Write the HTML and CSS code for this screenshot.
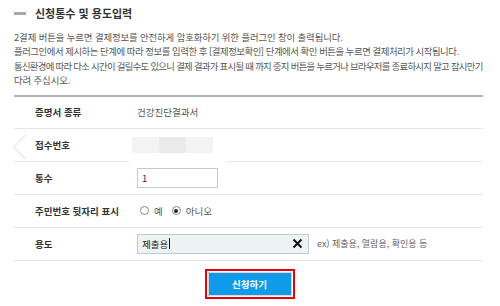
FILE: index.html
```html
<!DOCTYPE html>
<html lang="ko">
<head>
    <meta charset="UTF-8">
    <title>신청통수 및 용도입력</title>
    <link rel="stylesheet" href="styles.css">
</head>
<body>
    <div class="section">
        <h2 class="section-title"><span class="title-bar"></span>신청통수 및 용도입력</h2>

        <div class="notice">
            <p>2결제 버튼을 누르면 결제정보를 안전하게 암호화하기 위한 플러그인 창이 출력됩니다.</p>
            <p class="tight">플러그인에서 제시하는 단계에 따라 정보를 입력한 후 [결제정보확인] 단계에서 확인 버튼을 누르면 결제처리가 시작됩니다.</p>
            <p class="tighter">통신환경에 따라 다소 시간이 걸릴수도 있으니 결제 결과가 표시될 때 까지 중지 버튼을 누르거나 브라우저를 종료하시지 말고 잠시만기</p>
            <p>다려 주십시오.</p>
        </div>

        <div class="form-table">
            <div class="row first">
                <div class="label">증명서 종류</div>
                <div class="value">건강진단결과서</div>
            </div>
            <div class="row">
                <span class="chevron"></span>
                <div class="label">접수번호</div>
                <div class="value">
                    <span class="masked"><span></span><span class="mid"></span><span></span></span>
                </div>
                <span class="mask-gap"></span>
            </div>
            <div class="row">
                <div class="label">통수</div>
                <div class="value">
                    <input class="input count" type="text" value="1">
                </div>
            </div>
            <div class="row">
                <div class="label">주민번호 뒷자리 표시</div>
                <div class="value radios">
                    <label class="radio"><span class="dot"></span>예</label>
                    <label class="radio"><span class="dot checked"></span>아니오</label>
                </div>
            </div>
            <div class="row">
                <div class="label">용도</div>
                <div class="value">
                    <div class="input purpose">
                        <span class="typed">제출용<span class="caret"></span></span>
                        <svg class="clear" width="11" height="11" viewBox="0 0 11 11">
                            <path d="M1.5 1.5 L9.5 9.5 M9.5 1.5 L1.5 9.5" stroke="#111" stroke-width="2" fill="none"/>
                        </svg>
                    </div>
                    <span class="hint">ex) 제출용, 열람용, 확인용 등</span>
                </div>
            </div>
        </div>

        <div class="actions">
            <div class="highlight">
                <button class="submit">신청하기</button>
            </div>
        </div>
    </div>
</body>
</html>
```

FILE: styles.css
```css
* {
    margin: 0;
    padding: 0;
    box-sizing: border-box;
}

body {
    font-family: "Noto Sans CJK KR", "Noto Sans", sans-serif;
    background: #fff;
    color: #333;
    width: 500px;
}

.section {
    padding: 5px 17px 0 14px;
}

.section-title {
    display: flex;
    align-items: center;
    font-size: 11px;
    line-height: 16px;
    font-weight: 700;
    color: #333;
}

.title-bar {
    display: inline-block;
    width: 12px;
    height: 3px;
    background: #a8a8a8;
    margin-right: 9px;
}

.notice {
    margin-top: 9px;
    padding-bottom: 7px;
    border-bottom: 2px solid #b4b4b4;
}

.notice p {
    font-size: 9.4px;
    line-height: 14.4px;
    color: #555;
    white-space: nowrap;
    letter-spacing: -0.1px;
}

.notice p.tight {
    letter-spacing: -0.45px;
}

.notice p.tighter {
    letter-spacing: -0.7px;
}

.row {
    position: relative;
    display: flex;
    align-items: center;
    height: 33px;
    border-bottom: 1px solid #e6e6e6;
}

.row.first {
    height: 32px;
}

.label {
    width: 123px;
    padding-left: 21px;
    font-size: 9.5px;
    font-weight: 700;
    color: #333;
}

.value {
    display: flex;
    align-items: center;
    font-size: 9.5px;
    color: #555;
}

.chevron {
    position: absolute;
    left: 2px;
    top: 9px;
    width: 18px;
    height: 18px;
    border-left: 2px solid #f0f0f0;
    border-bottom: 2px solid #f0f0f0;
    transform: rotate(45deg);
}

.masked {
    display: flex;
    height: 16px;
    margin-left: -5px;
}

.masked span {
    width: 27px;
    background: #f3f3f3;
}

.masked .mid {
    background: #eaeaea;
}

.mask-gap {
    position: absolute;
    left: 115px;
    bottom: -1px;
    width: 97px;
    height: 8px;
    background: #fff;
}

.input {
    height: 20px;
    border: 1px solid #c8c8c8;
    font-family: inherit;
    font-size: 9.5px;
    color: #333;
    padding: 0 4px;
}

.count {
    width: 81px;
    outline: none;
}

.radios {
    gap: 9px;
    margin-left: 3px;
}

.radio {
    display: flex;
    align-items: center;
    gap: 5px;
    color: #555;
}

.dot {
    position: relative;
    width: 9px;
    height: 9px;
    border: 1px solid #888;
    border-radius: 50%;
}

.dot.checked::after {
    content: "";
    position: absolute;
    left: 1.5px;
    top: 1.5px;
    width: 4px;
    height: 4px;
    border-radius: 50%;
    background: #222;
}

.purpose {
    display: flex;
    align-items: center;
    justify-content: space-between;
    width: 172px;
    background: #edf2f5;
    border-color: #c4c9cc;
}

.typed {
    display: flex;
    align-items: center;
    color: #222;
}

.caret {
    width: 1px;
    height: 11px;
    background: #111;
    margin-left: 1px;
}

.clear {
    margin-right: 1px;
}

.hint {
    margin-left: 8px;
    font-size: 9px;
    color: #666;
}

.actions {
    display: flex;
    justify-content: center;
    padding-top: 8px;
    padding-left: 2px;
}

.highlight {
    border: 2px solid #e8000b;
    padding: 2px;
}

.submit {
    display: block;
    width: 82px;
    height: 22px;
    border: none;
    background: #0f9be9;
    color: #fff;
    font-family: inherit;
    font-size: 9.5px;
    font-weight: 700;
    box-shadow: 0 0 0 1px #d9d9d9;
}
```
